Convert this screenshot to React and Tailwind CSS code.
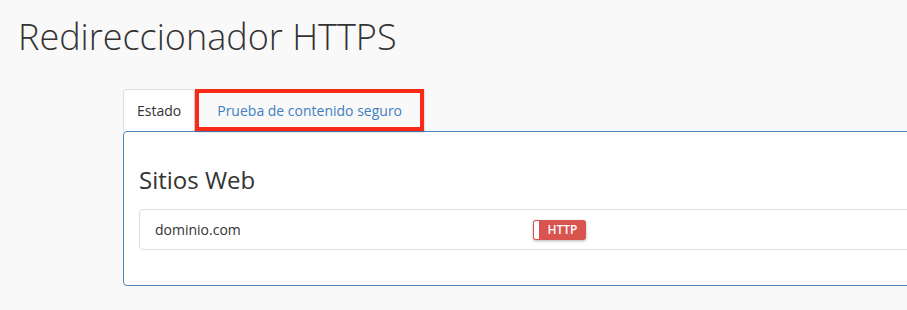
export default function App() {
  return (
    <div
      className="min-h-[310px] overflow-hidden bg-[#f9f9f9] pl-[18px] pt-[15px] text-[#333]"
      style={{ fontFamily: '"Open Sans", "Liberation Sans", sans-serif' }}
    >
      <h1 className="whitespace-nowrap text-[36px] font-light leading-[44px] text-[#333]">
        Redireccionador HTTPS
      </h1>

      <div className="ml-[105px] mt-[30px] w-[860px]">
        <div className="flex items-end">
          <div className="flex h-[42px] items-center rounded-t-[4px] border border-b-0 border-[#ddd] bg-white px-[13px] text-[14px]">
            Estado
          </div>
          <div className="flex h-[42px] items-center border-4 border-[#fb2a16] px-[18px] text-[14px] text-[#3f7fbf] shadow-[0_1px_2px_rgba(0,0,0,0.25)]">
            Prueba de contenido seguro
          </div>
        </div>

        <div className="h-[155px] rounded-[4px] border border-[#4f86c0] bg-white px-[15px] pt-[32px]">
          <h2 className="text-[24px] leading-[32px] text-[#333]">Sitios Web</h2>
          <div className="mt-[13px] flex h-[41px] items-center rounded-[4px] border border-[#ddd] bg-white pl-[15px]">
            <span className="w-[378px] text-[14px]">dominio.com</span>
            <div className="flex h-[20px] w-[53px] items-stretch overflow-hidden rounded-[3px] bg-[#d9534f] shadow-[0_1px_3px_rgba(0,0,0,0.3)]">
              <span className="my-[1px] ml-[1px] w-[5px] rounded-l-[2px] bg-white" />
              <span className="flex flex-1 items-center justify-center text-[12px] font-semibold text-white">
                HTTP
              </span>
            </div>
          </div>
        </div>
      </div>
    </div>
  );
}
